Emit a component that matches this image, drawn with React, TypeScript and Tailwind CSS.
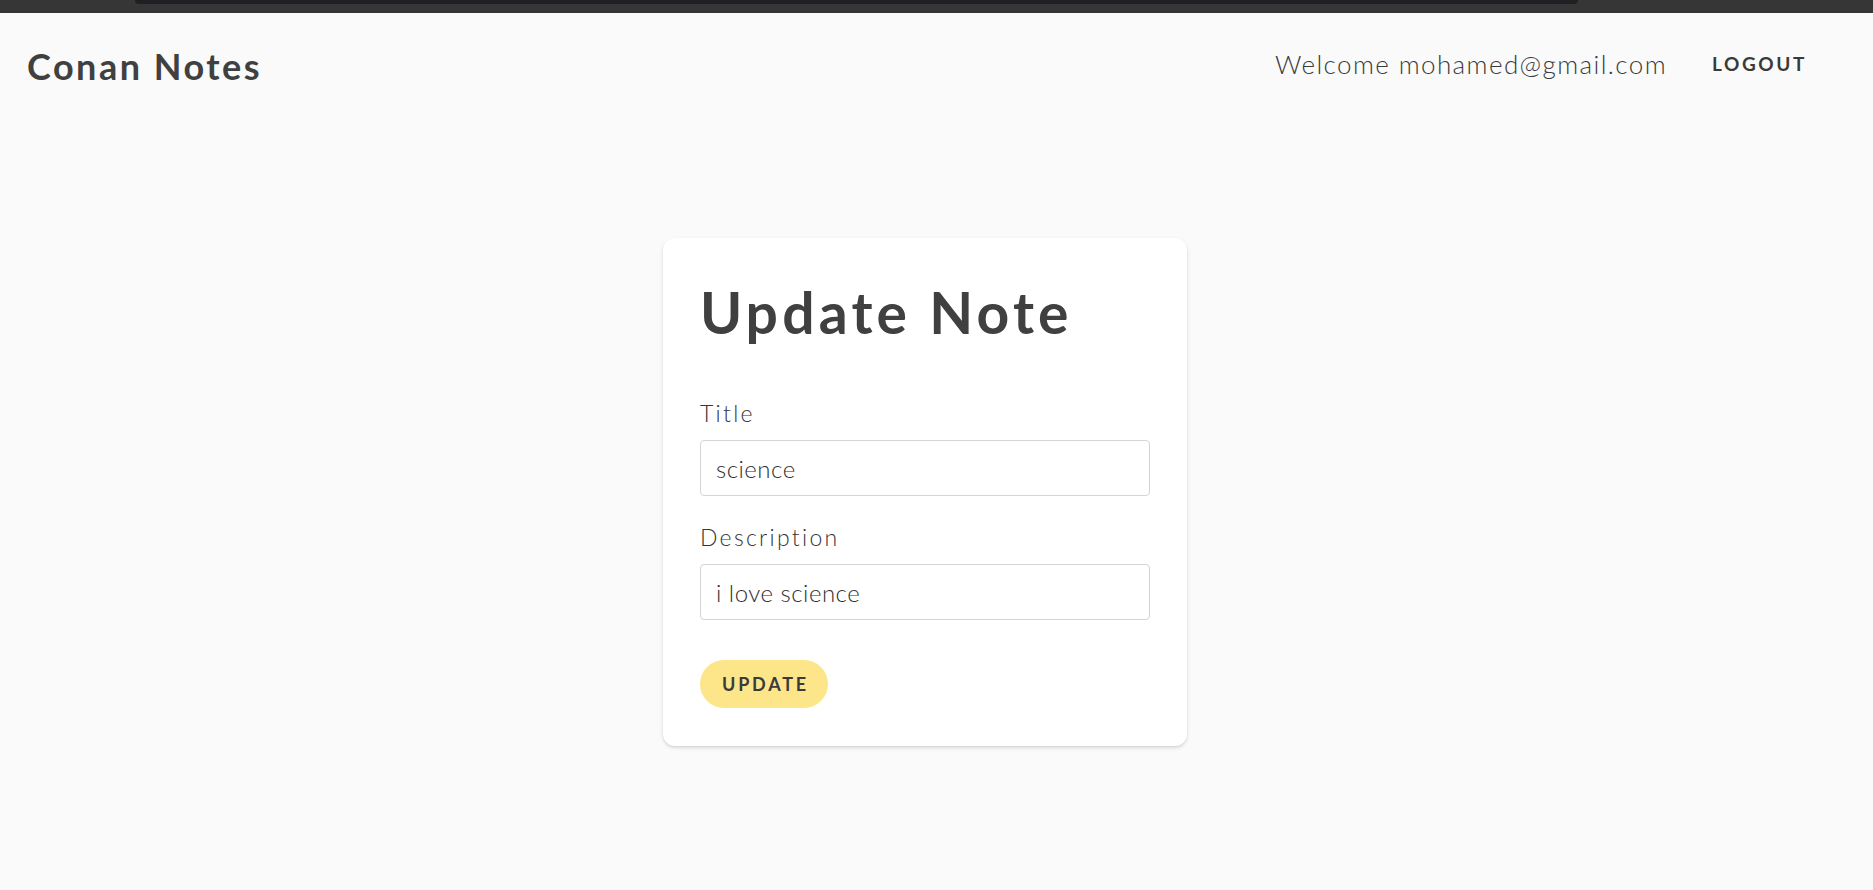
import React from 'react';

const font = { fontFamily: 'Lato, "Noto Sans", sans-serif' };

const Field = ({ label, value, top }: { label: string; value: string; top: string }) => (
  <div className={top}>
    <label className="block text-[23px] leading-[34px] font-light tracking-[2.3px] text-[#353535]">{label}</label>
    <input
      defaultValue={value}
      className="mt-[10px] block w-full h-[56px] px-[15px] text-[24px] font-light tracking-[0.5px] text-[#2f2f2f] bg-white border border-[#d4d4d4] rounded-[4px] outline-none"
      style={font}
    />
  </div>
);

export default function App() {
  return (
    <div className="min-h-[890px] bg-[#fafafa] text-[#404040]" style={font}>
      {/* window chrome strip */}
      <div className="h-[13px] bg-[#363636] pl-[135px] pr-[295px]">
        <div className="h-[4px] bg-[#202024] rounded-b-[6px]" />
      </div>

      <header className="h-[106px] flex items-center justify-between pl-[27px] pr-[66px]">
        <h1 className="text-[36px] font-bold tracking-[2.5px] text-[#404040]">Conan Notes</h1>
        <div className="flex items-center gap-[45px] -mt-[3px]">
          <span className="text-[26px] font-light tracking-[1.4px] text-[#3a3a3a]">Welcome mohamed@gmail.com</span>
          <button className="text-[19px] font-bold tracking-[2.6px] text-[#3a3a3a]">LOGOUT</button>
        </div>
      </header>

      <main className="flex justify-center pr-[23px] pt-[119px]">
        <div className="w-[524px] bg-white rounded-[12px] shadow-[0_2px_4px_rgba(0,0,0,0.10),0_1px_2px_rgba(0,0,0,0.08)] px-[37px] pt-[40px] pb-[38px]">
          <h2 className="text-[57px] leading-[68px] font-bold tracking-[4.2px] text-[#404040]">Update Note</h2>
          <Field label="Title" value="science" top="mt-[50px]" />
          <Field label="Description" value="i love science" top="mt-[24px]" />
          <button className="mt-[40px] w-[128px] h-[48px] rounded-full bg-[#fde68a] text-[18px] font-bold tracking-[2.8px] text-[#3a3a3a] flex items-center justify-center pl-[3px]">
            UPDATE
          </button>
        </div>
      </main>
    </div>
  );
}
